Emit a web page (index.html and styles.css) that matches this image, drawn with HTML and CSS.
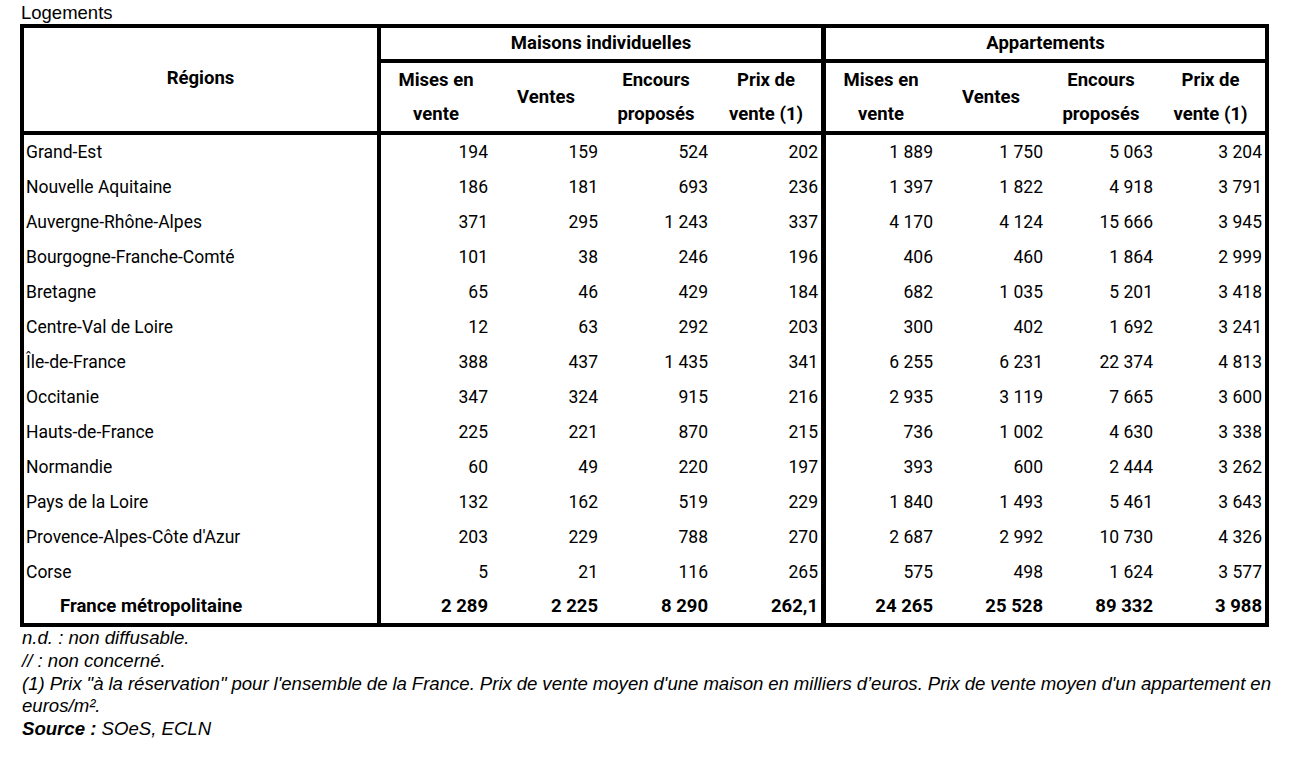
FILE: index.html
```html
<!DOCTYPE html>
<html lang="fr">
<head>
<meta charset="utf-8">
<title>Logements</title>
<link rel="stylesheet" href="styles.css">
</head>
<body>
<div class="page">
  <div class="caption">Logements</div>
  <table class="data">
    <colgroup>
      <col class="c-region">
      <col class="c-num"><col class="c-num"><col class="c-num"><col class="c-num-end">
      <col class="c-num"><col class="c-num"><col class="c-num"><col class="c-num-last">
    </colgroup>
    <thead>
      <tr>
        <th class="region-head" rowspan="2">Régions</th>
        <th class="group sep" colspan="4">Maisons individuelles</th>
        <th class="group" colspan="4">Appartements</th>
      </tr>
      <tr class="sub">
        <th>Mises en<br>vente</th>
        <th>Ventes</th>
        <th>Encours<br>proposés</th>
        <th class="sep">Prix de<br>vente (1)</th>
        <th>Mises en<br>vente</th>
        <th>Ventes</th>
        <th>Encours<br>proposés</th>
        <th>Prix de<br>vente (1)</th>
      </tr>
    </thead>
    <tbody>
      <tr><td class="region">Grand-Est</td><td>194</td><td>159</td><td>524</td><td class="sep">202</td><td>1&nbsp;889</td><td>1&nbsp;750</td><td>5&nbsp;063</td><td>3&nbsp;204</td></tr>
      <tr><td class="region">Nouvelle Aquitaine</td><td>186</td><td>181</td><td>693</td><td class="sep">236</td><td>1&nbsp;397</td><td>1&nbsp;822</td><td>4&nbsp;918</td><td>3&nbsp;791</td></tr>
      <tr><td class="region">Auvergne-Rhône-Alpes</td><td>371</td><td>295</td><td>1&nbsp;243</td><td class="sep">337</td><td>4&nbsp;170</td><td>4&nbsp;124</td><td>15&nbsp;666</td><td>3&nbsp;945</td></tr>
      <tr><td class="region">Bourgogne-Franche-Comté</td><td>101</td><td>38</td><td>246</td><td class="sep">196</td><td>406</td><td>460</td><td>1&nbsp;864</td><td>2&nbsp;999</td></tr>
      <tr><td class="region">Bretagne</td><td>65</td><td>46</td><td>429</td><td class="sep">184</td><td>682</td><td>1&nbsp;035</td><td>5&nbsp;201</td><td>3&nbsp;418</td></tr>
      <tr><td class="region">Centre-Val de Loire</td><td>12</td><td>63</td><td>292</td><td class="sep">203</td><td>300</td><td>402</td><td>1&nbsp;692</td><td>3&nbsp;241</td></tr>
      <tr><td class="region">Île-de-France</td><td>388</td><td>437</td><td>1&nbsp;435</td><td class="sep">341</td><td>6&nbsp;255</td><td>6&nbsp;231</td><td>22&nbsp;374</td><td>4&nbsp;813</td></tr>
      <tr><td class="region">Occitanie</td><td>347</td><td>324</td><td>915</td><td class="sep">216</td><td>2&nbsp;935</td><td>3&nbsp;119</td><td>7&nbsp;665</td><td>3&nbsp;600</td></tr>
      <tr><td class="region">Hauts-de-France</td><td>225</td><td>221</td><td>870</td><td class="sep">215</td><td>736</td><td>1&nbsp;002</td><td>4&nbsp;630</td><td>3&nbsp;338</td></tr>
      <tr><td class="region">Normandie</td><td>60</td><td>49</td><td>220</td><td class="sep">197</td><td>393</td><td>600</td><td>2&nbsp;444</td><td>3&nbsp;262</td></tr>
      <tr><td class="region">Pays de la Loire</td><td>132</td><td>162</td><td>519</td><td class="sep">229</td><td>1&nbsp;840</td><td>1&nbsp;493</td><td>5&nbsp;461</td><td>3&nbsp;643</td></tr>
      <tr><td class="region">Provence-Alpes-Côte d'Azur</td><td>203</td><td>229</td><td>788</td><td class="sep">270</td><td>2&nbsp;687</td><td>2&nbsp;992</td><td>10&nbsp;730</td><td>4&nbsp;326</td></tr>
      <tr><td class="region">Corse</td><td>5</td><td>21</td><td>116</td><td class="sep">265</td><td>575</td><td>498</td><td>1&nbsp;624</td><td>3&nbsp;577</td></tr>
      <tr class="total"><td class="region">France métropolitaine</td><td>2&nbsp;289</td><td>2&nbsp;225</td><td>8&nbsp;290</td><td class="sep">262,1</td><td>24&nbsp;265</td><td>25&nbsp;528</td><td>89&nbsp;332</td><td>3&nbsp;988</td></tr>
    </tbody>
  </table>
  <div class="notes">
    <p>n.d. : non diffusable.</p>
    <p>// : non concerné.</p>
    <p class="just">(1) Prix "à la réservation" pour l'ensemble de la France. Prix de vente moyen d'une maison en milliers d’euros. Prix de vente moyen d'un appartement en euros/m².</p>
    <p><b>Source :</b> SOeS, ECLN</p>
  </div>
</div>
</body>
</html>
```

FILE: styles.css
```css
html, body {
  margin: 0;
  padding: 0;
  background: #ffffff;
  color: #000000;
}

.page {
  padding-left: 20px;
  width: 1251px;
}

.caption {
  font-family: "Liberation Sans", Arial, sans-serif;
  font-size: 18.5px;
  line-height: 22px;
  padding-top: 2px;
  padding-left: 1px;
}

.data {
  box-sizing: border-box;
  width: 1249px;
  table-layout: fixed;
  border-collapse: separate;
  border-spacing: 0;
  border: 4px solid #000;
  font-family: Roboto, "Liberation Sans", sans-serif;
  font-size: 17.5px;
}

.c-region { width: 357px; }
.c-num { width: 110px; }
.c-num-end { width: 115px; }
.c-num-last { width: 109px; }

.data th,
.data td {
  box-sizing: border-box;
  padding: 0;
}

.data th {
  font-weight: 700;
  font-size: 18.5px;
  text-align: center;
  vertical-align: middle;
  border-bottom: 4px solid #000;
}

.data .region-head {
  border-right: 4px solid #000;
  padding-bottom: 4px;
}

.data .group {
  line-height: 31px;
}

.data .sub th {
  line-height: 34px;
}

.data .sep {
  border-right: 5px solid #000;
}

.data td {
  line-height: 34px;
  padding-top: 1px;
  text-align: right;
  padding-right: 3px;
  white-space: nowrap;
}

.data td.region {
  text-align: left;
  padding-left: 2px;
  padding-right: 0;
  border-right: 4px solid #000;
}

.data tbody tr:first-child td {
  padding-top: 0;
}

.data .total td {
  font-weight: 700;
  font-size: 18.5px;
  line-height: 33px;
  padding-top: 1px;
}

.data .total td.region {
  padding-left: 36px;
}

.notes {
  font-family: "Liberation Sans", Arial, sans-serif;
  font-style: italic;
  font-size: 18.6px;
  line-height: 22.75px;
  padding-left: 2px;
}

.notes p {
  margin: 0;
}

.notes .just {
  text-align: justify;
  word-spacing: -2px;
}

.notes b {
  font-weight: 700;
}
```
